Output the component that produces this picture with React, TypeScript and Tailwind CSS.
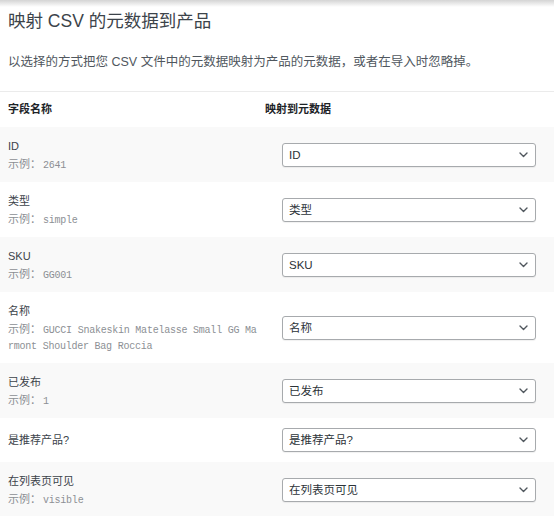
type Field = {
  label: string;
  example?: string;
  value: string;
};

const fields: Field[] = [
  { label: 'ID', example: '2641', value: 'ID' },
  { label: '类型', example: 'simple', value: '类型' },
  { label: 'SKU', example: 'GG001', value: 'SKU' },
  {
    label: '名称',
    example: 'GUCCI Snakeskin Matelasse Small GG Marmont Shoulder Bag Roccia',
    value: '名称',
  },
  { label: '已发布', example: '1', value: '已发布' },
  { label: '是推荐产品?', value: '是推荐产品?' },
  { label: '在列表页可见', example: 'visible', value: '在列表页可见' },
];

const Chevron = () => (
  <svg width="9" height="6" viewBox="0 0 9 6" fill="none">
    <path d="M1 1l3.5 3.5L8 1" stroke="#50575e" strokeWidth="1.4" strokeLinecap="round" strokeLinejoin="round" />
  </svg>
);

const MapSelect = ({ value }: { value: string }) => (
  <div className="flex h-[24px] w-[254px] items-center justify-between rounded-[3px] border border-[#a7aaad] bg-white pl-[6px] pr-[7px] text-[11.5px] leading-[16px] text-[#2c3338] shadow-[0_1px_1px_rgba(0,0,0,0.06)]">
    <span>{value}</span>
    <Chevron />
  </div>
);

const App = () => {
  return (
    <div className="relative min-h-screen bg-white font-['Liberation_Sans','Noto_Sans_CJK_SC',sans-serif]">
      <div className="pointer-events-none absolute inset-x-0 top-0 h-[7px] bg-gradient-to-b from-[#d4d4d4] to-white/0" />

      <div className="px-2 pt-[9px]">
        <h1 className="text-[17.5px] leading-[24px] text-[#3c434a]">映射 CSV 的元数据到产品</h1>
        <p className="mt-[20px] text-[12.5px] leading-[18px] text-[#50575e]">
          以选择的方式把您 CSV 文件中的元数据映射为产品的元数据，或者在导入时忽略掉。
        </p>
      </div>

      <div className="mt-[20px] border-t border-[#ebebeb]">
        <div className="grid h-[35px] grid-cols-[265px_1fr] items-center text-[11px] font-bold text-[#1d2327]">
          <div className="pl-2">字段名称</div>
          <div>映射到元数据</div>
        </div>

        {fields.map((f, i) => (
          <div
            key={f.label}
            className={`grid grid-cols-[265px_1fr] items-center py-[10px] ${i % 2 === 0 ? 'bg-[#f9f9f9]' : 'bg-white'}`}
          >
            <div className="pl-2 pr-[6px]">
              <div className="h-[18px] text-[11px] leading-[18px] text-[#3c434a]">{f.label}</div>
              {f.example && (
                <div className="mt-px break-all text-[11px] leading-[16px] text-[#8c8f94]">
                  <span className="leading-[12px]">示例：</span>
                  <code className="ml-[2px] font-['Liberation_Mono',monospace] text-[10px] leading-[10px] tracking-[-0.23px] text-[#8c8f94]">
                    {f.example}
                  </code>
                </div>
              )}
            </div>
            <div className="pl-[17px]">
              <MapSelect value={f.value} />
            </div>
          </div>
        ))}
      </div>
    </div>
  );
};

export default App;
